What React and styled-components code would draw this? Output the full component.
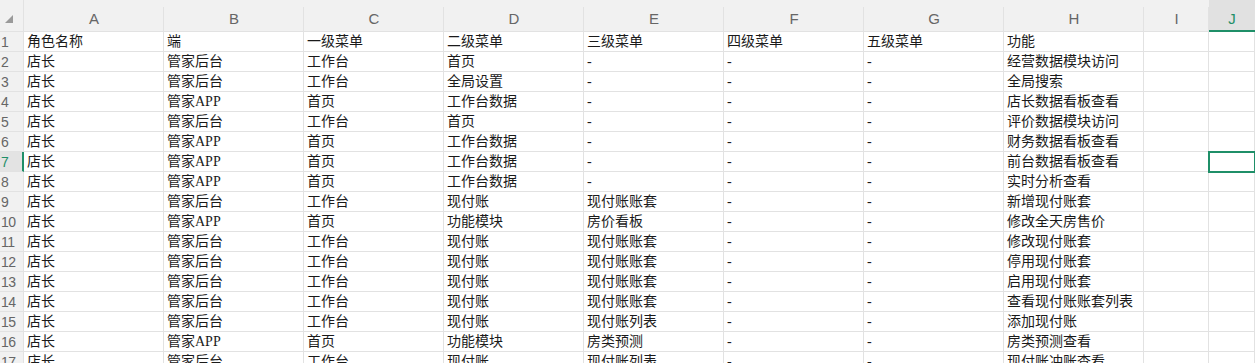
import styled, { createGlobalStyle } from "styled-components";

const GlobalStyle = createGlobalStyle`
  html, body {
    margin: 0;
    padding: 0;
    background: #ffffff;
    overflow: hidden;
  }
`;

const COLUMNS = ["A", "B", "C", "D", "E", "F", "G", "H", "I", "J"];
const SELECTED_COL = "J";
const SELECTED_ROW = 7;

const rows = [
  ["角色名称", "端", "一级菜单", "二级菜单", "三级菜单", "四级菜单", "五级菜单", "功能"],
  ["店长", "管家后台", "工作台", "首页", "-", "-", "-", "经营数据模块访问"],
  ["店长", "管家后台", "工作台", "全局设置", "-", "-", "-", "全局搜索"],
  ["店长", "管家APP", "首页", "工作台数据", "-", "-", "-", "店长数据看板查看"],
  ["店长", "管家后台", "工作台", "首页", "-", "-", "-", "评价数据模块访问"],
  ["店长", "管家APP", "首页", "工作台数据", "-", "-", "-", "财务数据看板查看"],
  ["店长", "管家APP", "首页", "工作台数据", "-", "-", "-", "前台数据看板查看"],
  ["店长", "管家APP", "首页", "工作台数据", "-", "-", "-", "实时分析查看"],
  ["店长", "管家后台", "工作台", "现付账", "现付账账套", "-", "-", "新增现付账套"],
  ["店长", "管家APP", "首页", "功能模块", "房价看板", "-", "-", "修改全天房售价"],
  ["店长", "管家后台", "工作台", "现付账", "现付账账套", "-", "-", "修改现付账套"],
  ["店长", "管家后台", "工作台", "现付账", "现付账账套", "-", "-", "停用现付账套"],
  ["店长", "管家后台", "工作台", "现付账", "现付账账套", "-", "-", "启用现付账套"],
  ["店长", "管家后台", "工作台", "现付账", "现付账账套", "-", "-", "查看现付账账套列表"],
  ["店长", "管家后台", "工作台", "现付账", "现付账列表", "-", "-", "添加现付账"],
  ["店长", "管家APP", "首页", "功能模块", "房类预测", "-", "-", "房类预测查看"],
  ["店长", "管家后台", "工作台", "现付账", "现付账列表", "-", "-", "现付账冲账查看"],
];

const GREEN = "#1f8f68";
const LINE = "#e2e2e2";

const Sheet = styled.div`
  display: grid;
  grid-template-columns: 24px repeat(8, 140px) 65px 46px;
  grid-auto-rows: 20px;
  grid-template-rows: 32px;
  width: 1255px;
  overflow: hidden;
`;

const Corner = styled.div`
  background: #f1f1f1;
  border-right: 1px solid ${LINE};
  border-bottom: 1px solid ${LINE};
  display: flex;
  align-items: flex-end;
  padding: 0 0 8px 5px;
  box-sizing: border-box;
`;

const CornerMark = styled.span`
  width: 0;
  height: 0;
  border-left: 8px solid transparent;
  border-bottom: 8px solid #9a9a9a;
`;

const ColHeader = styled.div`
  position: relative;
  background: ${(p) => (p.$active ? "#e1e1e1" : "#f1f1f1")};
  border-bottom: ${(p) => (p.$active ? `2px solid ${GREEN}` : `1px solid ${LINE}`)};
  box-sizing: border-box;
  display: flex;
  align-items: center;
  justify-content: center;
  padding-top: 6px;
  font-family: "Liberation Sans", Arial, sans-serif;
  font-size: 15px;
  color: ${(p) => (p.$active ? GREEN : "#666")};

  &::after {
    content: "";
    position: absolute;
    right: 0;
    top: 7px;
    bottom: 0;
    width: 1px;
    background: ${LINE};
  }
`;

const RowHeader = styled.div`
  background: ${(p) => (p.$active ? "#e3e3e3" : "#f1f1f1")};
  border-right: ${(p) => (p.$active ? `2px solid ${GREEN}` : `1px solid ${LINE}`)};
  border-bottom: 1px solid ${LINE};
  box-sizing: border-box;
  padding-left: 1px;
  font-family: "Liberation Sans", Arial, sans-serif;
  font-size: 14px;
  line-height: 20px;
  color: ${(p) => (p.$active ? GREEN : "#666")};
  overflow: hidden;
  white-space: nowrap;
  letter-spacing: -0.5px;
`;

const Cell = styled.div`
  border-right: 1px solid ${LINE};
  border-bottom: 1px solid ${LINE};
  box-sizing: border-box;
  padding-left: 3px;
  font-family: "Liberation Serif", "Noto Sans CJK SC", serif;
  font-size: 14px;
  line-height: 20px;
  color: #1a1a1a;
  white-space: nowrap;
  overflow: hidden;
  outline: ${(p) => (p.$selected ? `2px solid ${GREEN}` : "none")};
  outline-offset: -1px;
  position: ${(p) => (p.$selected ? "relative" : "static")};
  z-index: ${(p) => (p.$selected ? 1 : "auto")};
`;

export default function App() {
  return (
    <>
      <GlobalStyle />
      <Sheet>
        <Corner>
          <CornerMark />
        </Corner>
        {COLUMNS.map((col) => (
          <ColHeader key={col} $active={col === SELECTED_COL}>
            {col}
          </ColHeader>
        ))}
        {rows.map((row, r) => {
          const rowNo = r + 1;
          return [
            <RowHeader key={`h${rowNo}`} $active={rowNo === SELECTED_ROW}>
              {rowNo}
            </RowHeader>,
            ...COLUMNS.map((col, c) => (
              <Cell
                key={`${col}${rowNo}`}
                $selected={rowNo === SELECTED_ROW && col === SELECTED_COL}
              >
                {row[c] || ""}
              </Cell>
            )),
          ];
        })}
      </Sheet>
    </>
  );
}
